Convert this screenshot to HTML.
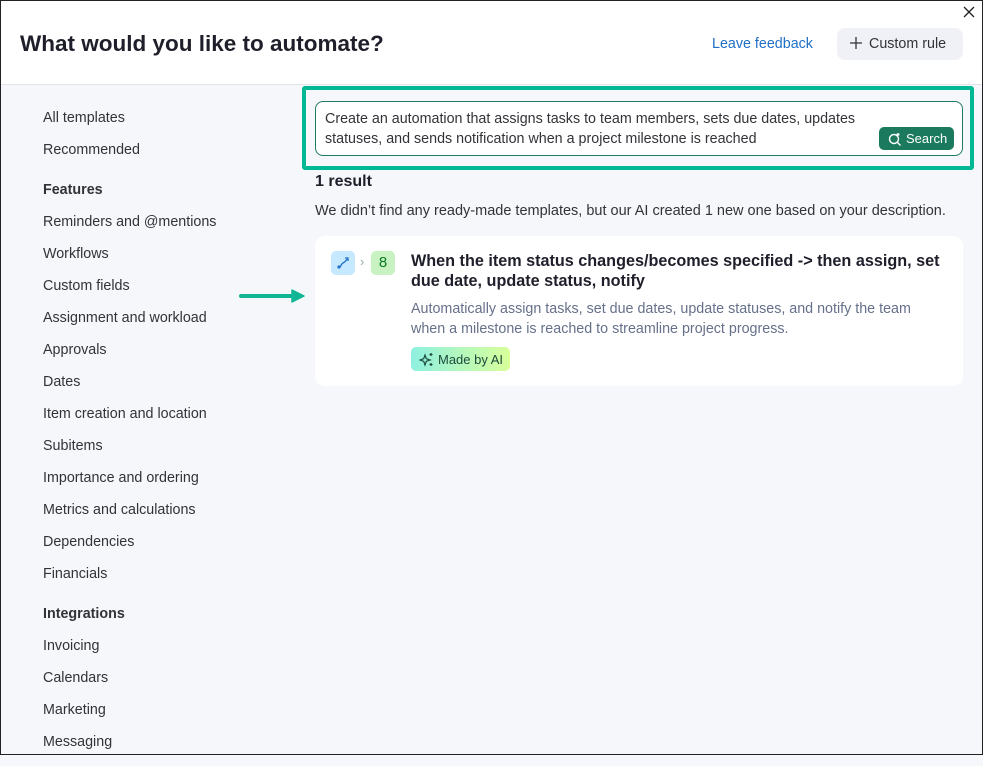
<!DOCTYPE html>
<html><head><style>
*{box-sizing:border-box;margin:0;padding:0}
body{width:983px;height:755px;overflow:hidden;font-family:"Liberation Sans",sans-serif;background:#f6f7fb;position:relative;color:#323338}
.frame{position:absolute;inset:0;border:1px solid #222;pointer-events:none;z-index:9}
.hdr{position:absolute;left:0;top:0;width:983px;height:85px;background:#fff;border-bottom:1px solid #e3e4e8}
h1{position:absolute;left:20px;top:31px;font-size:22.5px;font-weight:bold;color:#1f1f2b}
.fb{position:absolute;left:712px;top:36px;font-size:14.3px;color:#1f6fc4}
.cr{position:absolute;left:837px;top:28px;width:126px;height:32px;background:#eff1f7;border-radius:8px;font-size:14.3px;color:#323338;padding:8px 0 0 32px}
.x{position:absolute;left:962px;top:5px}
.side{position:absolute;left:43px;top:110px;font-size:14.3px;color:#323338}
.side div{height:32px;line-height:16px}
.side .h{font-weight:bold;height:40px;padding-top:8px}
.box{position:absolute;left:302px;top:86px;width:672px;height:84px;border:4px solid #00b894;border-radius:3px}
.inp{position:absolute;left:315px;top:101px;width:648px;height:55px;background:#fff;border:1px solid #1e7a63;border-radius:8px;font-size:14.3px;line-height:20px;padding:7px 0 0 9px;color:#323338}
.sb{position:absolute;left:879px;top:127px;width:75px;height:23px;background:#1b7a5d;border-radius:5px;color:#fff;font-size:13px;padding:4px 0 0 27px}
.res{position:absolute;left:315px;top:173px;font-size:16px;font-weight:bold;color:#1f1f2b}
.sub{position:absolute;left:315px;top:203px;font-size:14.5px;color:#323338}
.card{position:absolute;left:315px;top:236px;width:648px;height:150px;background:#fff;border-radius:10px}
.i1{position:absolute;left:16px;top:15px;width:24px;height:24px;background:#c6e9ff;border-radius:5px}
.i2{position:absolute;left:56px;top:15px;width:24px;height:24px;background:#c8f2c2;border-radius:5px;color:#0a7a22;font-size:15px;text-align:center;line-height:24px}
.gt{position:absolute;left:45px;top:18px;color:#9aa;font-size:13px}
.ct{position:absolute;left:96px;top:15px;width:540px;font-size:16.2px;font-weight:bold;line-height:20px;color:#1f1f2b}
.cd{position:absolute;left:96px;top:63px;width:520px;font-size:14.3px;line-height:20px;color:#66708a}
.ai{position:absolute;left:96px;top:111px;width:99px;height:24px;border-radius:5px;background:linear-gradient(90deg,#8ef0e0,#d9ff9a);font-size:13px;color:#1b4a3c;padding:5px 0 0 27px}
.arrow{position:absolute;left:238px;top:289px;width:68px;height:14px}
</style></head><body>
<div class="hdr">
<h1>What would you like to automate?</h1>
<div class="fb">Leave feedback</div>
<div class="cr"><svg style="position:absolute;left:13px;top:9px" width="12" height="12" viewBox="0 0 12 12" stroke="#323338" stroke-width="1.3"><path d="M6 0V12M0 6H12"/></svg>Custom rule</div>
<svg class="x" width="14" height="14" viewBox="0 0 14 14" stroke="#222" stroke-width="1.3"><path d="M2 2L12 12M12 2L2 12"/></svg>
</div>
<div class="side">
<div>All templates</div><div>Recommended</div>
<div class="h">Features</div>
<div>Reminders and @mentions</div><div>Workflows</div><div>Custom fields</div><div>Assignment and workload</div><div>Approvals</div><div>Dates</div><div>Item creation and location</div><div>Subitems</div><div>Importance and ordering</div><div>Metrics and calculations</div><div>Dependencies</div><div>Financials</div>
<div class="h">Integrations</div>
<div>Invoicing</div><div>Calendars</div><div>Marketing</div><div>Messaging</div>
</div>
<div class="box"></div>
<div class="inp">Create an automation that assigns tasks to team members, sets due dates, updates<br>statuses, and sends notification when a project milestone is reached</div>
<div class="sb"><svg style="position:absolute;left:9px;top:5px" width="14" height="14" viewBox="0 0 14 14" fill="none" stroke="#fff" stroke-width="1.4"><circle cx="6" cy="7" r="4.5"/><path d="M9.5 10.5L12.5 13.5M10 1v3M8.5 2.5h3"/></svg>Search</div>
<div class="res">1 result</div>
<div class="sub">We didn’t find any ready-made templates, but our AI created 1 new one based on your description.</div>
<svg class="arrow" viewBox="0 0 68 14"><path d="M3 7H56" stroke="#10b594" stroke-width="4" stroke-linecap="round"/><path d="M54 1L66 7L54 13Z" fill="#10b594" stroke="#10b594" stroke-linejoin="round" stroke-width="1.5"/></svg>
<div class="card">
<div class="i1"><svg width="24" height="24" viewBox="0 0 24 24" fill="none" stroke="#1f6fc4" stroke-width="1.3"><path d="M8 16c2 0 2-3 4-4s3-2 4-4"/><circle cx="8" cy="16" r="1"/><path d="M14 7h3v3"/></svg></div>
<div class="gt">›</div>
<div class="i2">8</div>
<div class="ct">When the item status changes/becomes specified -&gt; then assign, set due date, update status, notify</div>
<div class="cd">Automatically assign tasks, set due dates, update statuses, and notify the team when a milestone is reached to streamline project progress.</div>
<div class="ai"><svg style="position:absolute;left:8px;top:5px" width="15" height="15" viewBox="0 0 15 15" fill="none" stroke="#1b4a3c" stroke-width="1.2"><path d="M6 3l1.3 3.7L11 8l-3.7 1.3L6 13l-1.3-3.7L1 8l3.7-1.3z"/><path d="M12 1v3M10.5 2.5h3M12 11v3M10.5 12.5h3"/></svg>Made by AI</div>
</div>
<div class="frame"></div>
</body></html>
